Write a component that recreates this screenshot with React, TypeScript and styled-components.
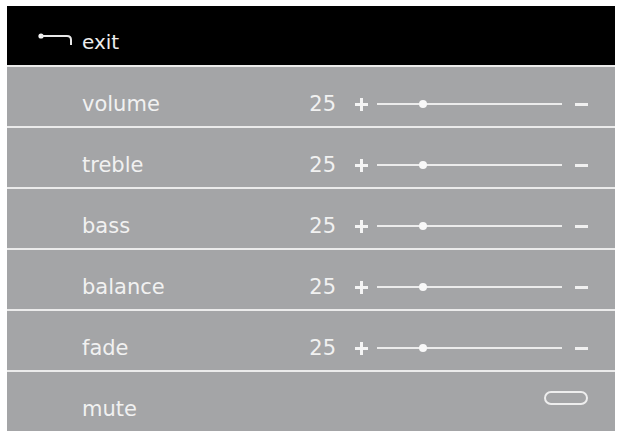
import React from 'react';
import styled, { createGlobalStyle } from 'styled-components';

const GlobalStyle = createGlobalStyle`
    body {
        margin: 0;
        background: #ffffff;
        font-family: 'DejaVu Sans', 'Liberation Sans', sans-serif;
    }
`;

const settings = [
    { name: 'volume', value: 25 },
    { name: 'treble', value: 25 },
    { name: 'bass', value: 25 },
    { name: 'balance', value: 25 },
    { name: 'fade', value: 25 },
];

const ExitIcon = () => (
    <svg width='38' height='16' viewBox='0 0 38 16'>
        <circle cx='4' cy='4' r='2.6' fill='#f4f4f4' />
        <path d='M4 4 H30 Q34 4 34 8 V13' fill='none' stroke='#e8e8e8' strokeWidth='2' />
    </svg>
);

const App: React.FC = () => {
    return (
        <>
            <GlobalStyle />
            <StyledPanel>
                <StyledHeader>
                    <ExitIcon />
                    <span>exit</span>
                </StyledHeader>
                {settings.map((s) => (
                    <StyledRow key={s.name}>
                        <StyledLabel>{s.name}</StyledLabel>
                        <StyledValue>{s.value}</StyledValue>
                        <StyledPlus aria-label='+' />
                        <StyledTrack>
                            <StyledThumb style={{ left: `${s.value}%` }} />
                        </StyledTrack>
                        <StyledMinus aria-label='-' />
                    </StyledRow>
                ))}
                <StyledRow>
                    <StyledLabel>mute</StyledLabel>
                    <StyledToggle />
                </StyledRow>
            </StyledPanel>
        </>
    );
};

const StyledPanel = styled.div`
    margin: 6px 0 0 7px;
    width: 608px;
    display: flex;
    flex-direction: column;
    background: #a4a5a7;
`;

const StyledHeader = styled.div`
    height: 59px;
    box-sizing: border-box;
    padding: 13px 0 0 30px;
    display: flex;
    align-items: center;
    gap: 7px;
    background: #000;
    color: #ededed;
    font-size: 20px;

    & svg {
        margin-top: -4px;
    }
`;

const StyledRow = styled.div`
    height: 61px;
    box-sizing: border-box;
    border-top: 2px solid #ebebeb;
    padding: 15px 27px 0 75px;
    display: flex;
    align-items: center;
    color: #f1f1f1;
    font-size: 21px;
`;

const StyledLabel = styled.div`
    flex: 1;
`;

const StyledValue = styled.div`
    margin-right: 19px;
`;

const StyledPlus = styled.div`
    position: relative;
    width: 13px;
    height: 13px;
    margin-right: 9px;

    &::before,
    &::after {
        content: '';
        position: absolute;
        background: #f4f4f4;
    }
    &::before {
        left: 0;
        right: 0;
        top: 5px;
        height: 3px;
    }
    &::after {
        top: 0;
        bottom: 0;
        left: 5px;
        width: 3px;
    }
`;

const StyledTrack = styled.div`
    position: relative;
    width: 185px;
    height: 2px;
    background: #ececec;
`;

const StyledThumb = styled.div`
    position: absolute;
    top: -3px;
    width: 8px;
    height: 8px;
    margin-left: -4px;
    border-radius: 50%;
    background: #f8f8f8;
`;

const StyledMinus = styled.div`
    width: 13px;
    height: 3px;
    margin-left: 13px;
    background: #f0f0f0;
`;

const StyledToggle = styled.div`
    width: 44px;
    height: 14px;
    box-sizing: border-box;
    margin-bottom: 22px;
    border: 2px solid #eeeeee;
    border-radius: 8px;
`;

export default App;
